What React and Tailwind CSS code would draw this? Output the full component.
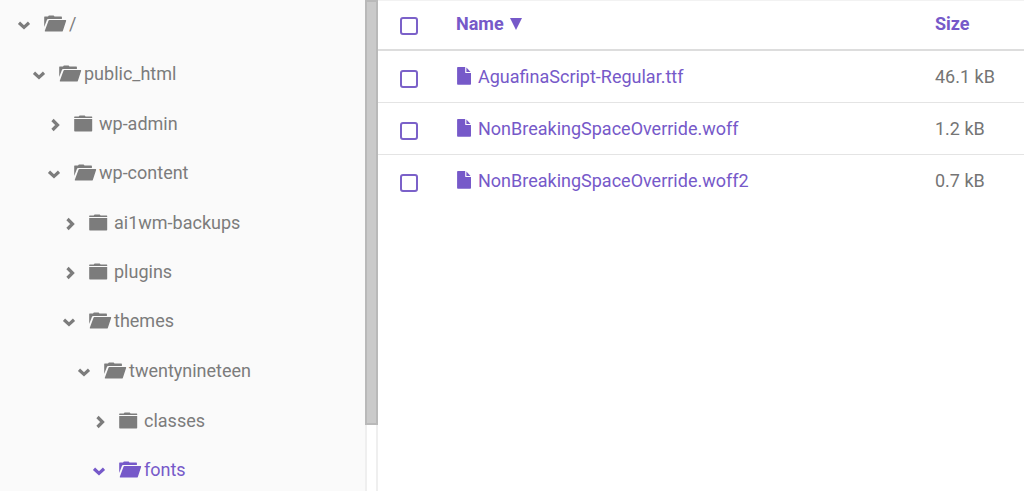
import React, { useState } from 'react';

const TREE = {
  name: '/',
  open: true,
  children: [
    {
      name: 'public_html',
      open: true,
      children: [
        { name: 'wp-admin' },
        {
          name: 'wp-content',
          open: true,
          children: [
            { name: 'ai1wm-backups' },
            { name: 'plugins' },
            {
              name: 'themes',
              open: true,
              children: [
                {
                  name: 'twentynineteen',
                  open: true,
                  children: [{ name: 'classes' }, { name: 'fonts', open: true, active: true }],
                },
              ],
            },
          ],
        },
      ],
    },
  ],
};

const FILES = [
  { name: 'AguafinaScript-Regular.ttf', size: '46.1 kB' },
  { name: 'NonBreakingSpaceOverride.woff', size: '1.2 kB' },
  { name: 'NonBreakingSpaceOverride.woff2', size: '0.7 kB' },
];

const Chevron = ({ open }) => (
  <svg viewBox="0 0 14 14" className="h-[14px] w-[14px]" fill="none" stroke="currentColor" strokeWidth="3.2">
    {open ? <path d="M2 4.800 7 9.400l5-4.600" /> : <path d="M5.500 2 10.500 7 5.500 12" />}
  </svg>
);

const FolderIcon = ({ open }) => (
  <svg viewBox="0 0 24 18" className="h-[18px] w-6" fill="currentColor">
    {open ? (
      <>
        <path d="M.2 2q0-.5.500-.5H4l.9-1h4.700l.9 1h6.800q.6 0 .6.600v1.900H4.200q-1 0-1.300.9L.2 12z" />
        <path d="M4.400 6q.3-.9 1-.9h16.200q.8 0 .5.800l-3.200 9.800q-.3.900-1 .9H1.300q-.8 0-.5-.8z" />
      </>
    ) : (
      <>
        <path d="M.2 3V2q0-.6.500-.6h4L5.600.5h5.100l.9.900h6.100q.5 0 .5.600v1z" />
        <path d="M.2 4.100h18v11.700q0 .7-.7.700H.9q-.7 0-.7-.7z" />
      </>
    )}
  </svg>
);

const FileIcon = () => (
  <svg viewBox="0 0 14 18" className="h-[18px] w-[14px] shrink-0" fill="currentColor">
    <path d="M.9 0h7.300v5.200q0 .9.900.9H14v10.900q0 .8-.8.800H.9q-.8 0-.8-.8V.8Q.1 0 .9 0z" />
    <path d="M9.400.6 13.600 4.900H9.400z" />
  </svg>
);

const Checkbox = ({ label, checked, onChange }) => (
  <input
    type="checkbox"
    aria-label={label}
    checked={checked}
    onChange={onChange}
    className="mt-1 block h-[18px] w-[18px] appearance-none rounded-[3px] border-2 border-[#7b61c9] bg-white checked:bg-[#7b61c9]"
  />
);

function TreeNode({ node }) {
  const [open, setOpen] = useState(!!node.open);

  return (
    <li>
      <div className={`flex h-[49px] items-center pb-0.5 ${node.active ? 'text-[#7659c9]' : 'text-[#7c7c7c]'}`}>
        <button type="button" aria-label={`Toggle ${node.name}`} onClick={() => setOpen(!open)} className="mr-[13px] pt-0.5">
          <Chevron open={open} />
        </button>
        <a href="#" className="flex items-center gap-px">
          <FolderIcon open={open} />
          <span>{node.name}</span>
        </a>
      </div>
      {open && node.children && (
        <ul className="pt-px pl-[15px]">
          {node.children.map((child) => (
            <TreeNode key={child.name} node={child} />
          ))}
        </ul>
      )}
    </li>
  );
}

export default function App() {
  const [selected, setSelected] = useState([]);

  const toggle = (name) => {
    setSelected(selected.includes(name) ? selected.filter((n) => n !== name) : [...selected, name]);
  };

  const toggleAll = () => {
    setSelected(selected.length === FILES.length ? [] : FILES.map((f) => f.name));
  };

  return (
    <div className="flex h-screen bg-white font-['Roboto',sans-serif] text-lg text-[#757575]">
      <nav className="w-[365px] shrink-0 overflow-hidden bg-[#fafafa] pl-[17px]">
        <ul>
          <TreeNode node={TREE} />
        </ul>
      </nav>

      {/* Tree scrollbar */}
      <div className="w-[13px] shrink-0 border-x-2 border-[#efefef] bg-white">
        <div className="-mx-[2px] h-[425px] border-2 border-[#b9b9b9] bg-[#cacaca]" />
      </div>

      <main className="min-w-0 flex-1 border-t border-[#f2f2f2]">
        <table className="w-full table-fixed border-collapse text-left">
          <thead>
            <tr className="h-[49px] border-b-2 border-[#dddddd] text-[#7659c9]">
              <th className="w-[78px] pb-[3px] pl-[22px]">
                <Checkbox label="Select all" checked={selected.length === FILES.length} onChange={toggleAll} />
              </th>
              <th className="pb-[3px] font-bold">
                <button type="button" className="flex items-center gap-[6px]">
                  Name
                  <svg viewBox="0 0 12 12" className="h-3 w-3" fill="currentColor">
                    <path d="M0 0h12L6 12z" />
                  </svg>
                </button>
              </th>
              <th className="w-[89px] pb-[3px] font-bold">Size</th>
            </tr>
          </thead>
          <tbody>
            {FILES.map((file) => (
              <tr key={file.name} className="h-[52px] border-b border-[#e4e4e4] last:border-b-0">
                <td className="pt-[2px] pl-[22px]">
                  <Checkbox label={file.name} checked={selected.includes(file.name)} onChange={() => toggle(file.name)} />
                </td>
                <td className="pt-[2px]">
                  <a href="#" className="flex items-center gap-[7px] pl-px text-[#7659c9]">
                    <span className="pb-0.5">
                      <FileIcon />
                    </span>
                    {file.name}
                  </a>
                </td>
                <td className="pt-[2px]">{file.size}</td>
              </tr>
            ))}
          </tbody>
        </table>
      </main>
    </div>
  );
}
